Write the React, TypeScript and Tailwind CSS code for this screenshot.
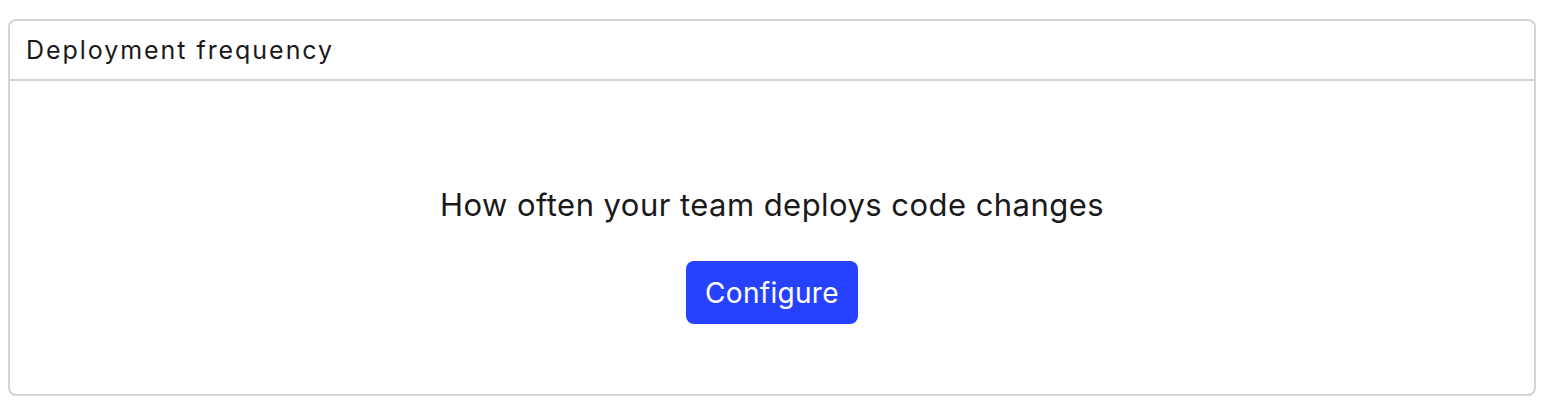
export default function App() {
  return (
    <div className="bg-white px-2 pt-[19px]" style={{ fontFamily: 'Inter, "Noto Sans", sans-serif' }}>
      <div className="border-2 border-[#d4d4d4] rounded-lg">
        <div className="h-[60px] flex items-center px-4 border-b-2 border-[#d4d4d4]">
          <h2 className="text-[25px] leading-[30px] text-[#1a1a1a] tracking-[1.95px]">Deployment frequency</h2>
        </div>
        <div className="h-[313px] flex flex-col items-center pt-[104px] gap-[36px]">
          <p className="text-[31px] leading-[40px] text-[#1a1a1a] tracking-[0.45px]">How often your team deploys code changes</p>
          <button className="bg-[#2642ff] text-white text-[28px] tracking-[0.3px] rounded-lg h-[63px] w-[172px]">Configure</button>
        </div>
      </div>
    </div>
  )
}
